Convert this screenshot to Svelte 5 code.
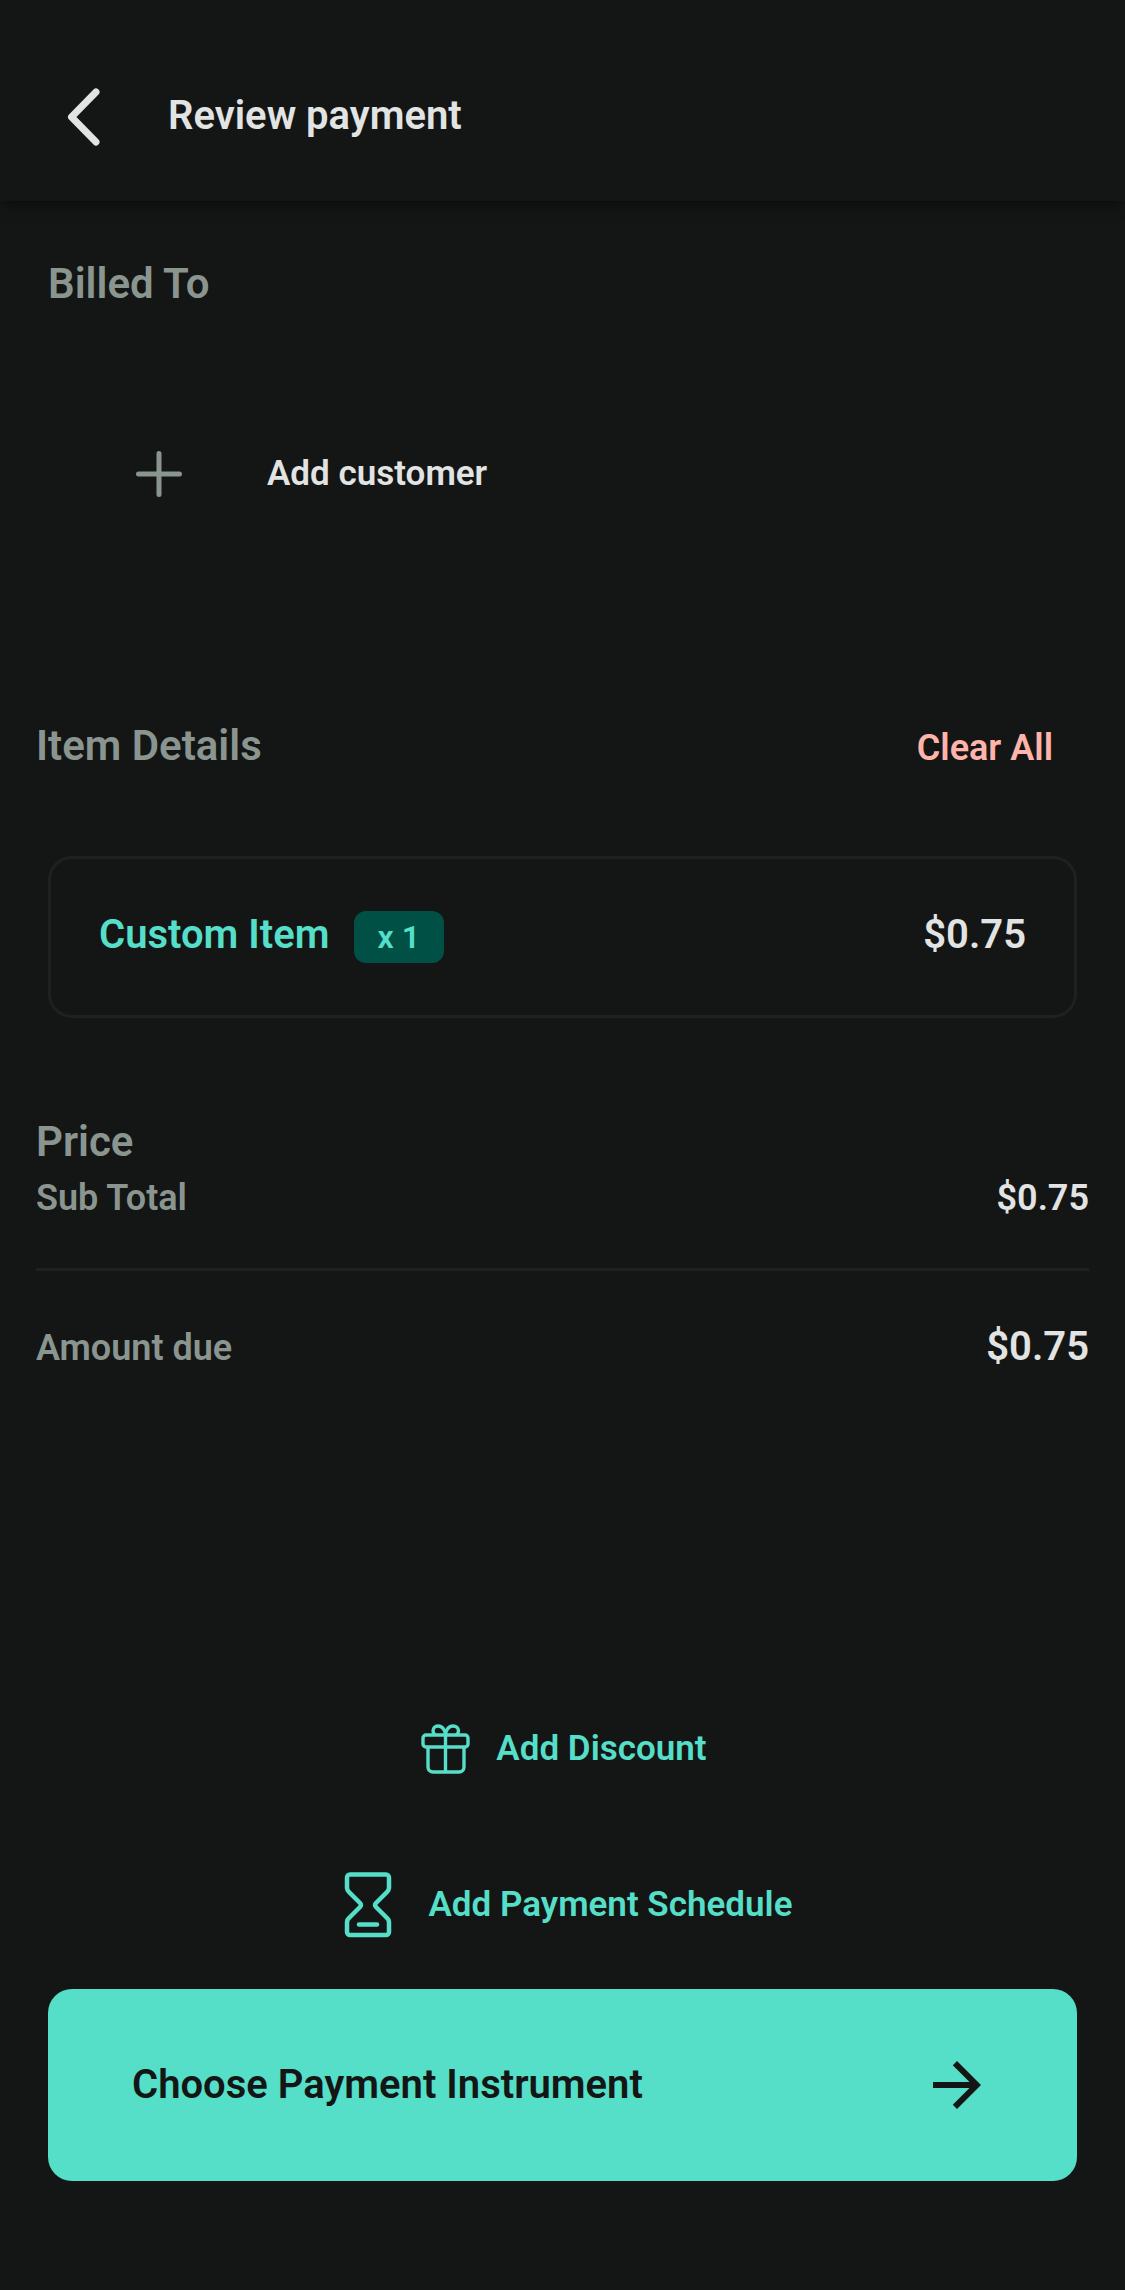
<script>
	let customer = $state('Add customer');
	let items = $state([{ name: 'Custom Item', qty: 1, price: 0.75 }]);

	const subTotal = $derived(items.reduce((sum, item) => sum + item.qty * item.price, 0));
	const amountDue = $derived(subTotal);

	/**
	 * Format an amount as dollars
	 * @param {Number} amount
	 * @return {String}
	 */
	function money(amount) {
		return '$' + amount.toFixed(2);
	}

	function clearAll() {
		items = [];
	}
</script>

<div class="page">
	<header class="topbar">
		<button class="back" type="button" aria-label="Back">
			<svg width="48" height="64" viewBox="0 0 48 64" fill="none" stroke="currentColor" stroke-width="7" stroke-linecap="round" stroke-linejoin="round">
				<path d="M36 8 11.500 33 36 58" />
			</svg>
		</button>
		<h1>Review payment</h1>
	</header>

	<main>
		<section class="billed">
			<h2>Billed To</h2>
			<button class="customer" type="button">
				<svg width="48" height="48" viewBox="0 0 48 48" fill="none" stroke="currentColor" stroke-width="5" stroke-linecap="round">
					<path d="M24 3.500v41M3.500 24h41" />
				</svg>
				<span>{customer}</span>
			</button>
		</section>

		<section class="items">
			<div class="row">
				<h2>Item Details</h2>
				<button class="clear" type="button" onclick={clearAll}>Clear All</button>
			</div>
			{#each items as item}
				<div class="card">
					<span class="name">{item.name}</span>
					<span class="qty">x {item.qty}</span>
					<span class="amount">{money(item.price)}</span>
				</div>
			{/each}
		</section>

		<section class="price">
			<h2>Price</h2>
			<div class="row">
				<span class="label">Sub Total</span>
				<span class="value">{money(subTotal)}</span>
			</div>
			<hr />
			<div class="row">
				<span class="label">Amount due</span>
				<span class="value total">{money(amountDue)}</span>
			</div>
		</section>
	</main>

	<footer>
		<button class="action" type="button">
			<svg width="54" height="54" viewBox="0 0 54 54" fill="none" stroke="currentColor" stroke-width="3.400" stroke-linejoin="round">
				<rect x="5" y="13" width="45" height="12" rx="3" />
				<path d="M10 25v20a5 5 0 0 0 5 5h26a5 5 0 0 0 5-5V25M27.500 11v39" />
				<path d="M27.500 13C27.500 8 24 4 20 4c-3 0-5 2-5 5 0 2 1 3 2 4M27.500 13C27.500 8 31 4 35 4c3 0 5.500 2 5.500 5 0 2-1 3-2 4" />
			</svg>
			<span>Add Discount</span>
		</button>
		<button class="action" type="button">
			<svg width="72" height="72" viewBox="0 0 72 72" fill="none" stroke="currentColor" stroke-width="4.500" stroke-linecap="round" stroke-linejoin="round">
				<path d="M18 5.500h36a3 3 0 0 1 3 3V19a6 6 0 0 1-2 4L44 34a3 3 0 0 0 0 4l11 11a6 6 0 0 1 2 4v10a3 3 0 0 1-3 3H18a3 3 0 0 1-3-3V53a6 6 0 0 1 2-4l11-11a3 3 0 0 0 0-4L17 23a6 6 0 0 1-2-4V8.500a3 3 0 0 1 3-3z" />
				<path d="M27 55.500h18" />
			</svg>
			<span>Add Payment Schedule</span>
		</button>
		<button class="choose" type="button">
			<span>Choose Payment Instrument</span>
			<svg width="72" height="72" viewBox="0 0 24 24" fill="currentColor">
				<path d="m12 4-1.410 1.410L16.170 11H4v2h12.170l-5.580 5.590L12 20l8-8z" />
			</svg>
		</button>
	</footer>
</div>

<style>
	:global(body) {
		margin: 0;
		background: #141615;
	}

	.page {
		--text: #e2e4e3;
		--muted: #8a9590;
		--accent: #55dec8;
		--line: #1e2120;
		box-sizing: border-box;
		min-height: 100vh;
		display: flex;
		flex-direction: column;
		background: #141615;
		color: var(--text);
		font-family: Roboto, sans-serif;
		font-size: 36px;
		font-weight: 600;
		line-height: 48px;
	}

	button {
		display: flex;
		align-items: center;
		margin: 0;
		padding: 0;
		border: 0;
		background: none;
		color: inherit;
		font: inherit;
		cursor: pointer;
	}

	svg {
		display: block;
		flex: none;
	}

	h1,
	h2 {
		margin: 0;
		font-size: 42px;
		font-weight: 600;
	}

	h1 {
		font-size: 40px;
	}

	h2 {
		color: var(--muted);
	}

	.topbar {
		display: flex;
		align-items: center;
		gap: 60px;
		padding: 84px 60px 53px;
		box-shadow: 0 8px 12px -4px rgba(0, 0, 0, 0.5);
	}

	.row {
		display: flex;
		align-items: baseline;
		justify-content: space-between;
	}

	.billed {
		padding: 59px 48px 0;
	}

	.customer {
		gap: 84px;
		width: 100%;
		margin-top: 82px;
		padding: 60px 87px;
		font-size: 35px;
	}

	.customer svg {
		color: var(--muted);
	}

	.items {
		padding: 164px 36px 0;
	}

	.clear {
		padding-right: 36px;
		color: #ffb4ab;
	}

	.card {
		display: flex;
		align-items: baseline;
		margin: 84px 12px 0;
		padding: 52px 48px;
		border: 3px solid var(--line);
		border-radius: 24px;
		font-size: 40px;
	}

	.name {
		color: var(--accent);
	}

	.qty {
		margin-left: 24px;
		padding: 0 24px;
		border-radius: 12px;
		background: #005045;
		color: var(--accent);
		font-size: 32px;
		line-height: 52px;
	}

	.amount {
		margin-left: auto;
	}

	.price {
		padding: 100px 36px 0;
	}

	.price .row {
		line-height: 56px;
	}

	.price h2 {
		margin-bottom: 4px;
	}

	.label {
		color: var(--muted);
	}

	.total {
		font-size: 40px;
	}

	hr {
		height: 3px;
		margin: 42px 0 48px;
		border: 0;
		background: var(--line);
	}

	footer {
		display: flex;
		flex-direction: column;
		align-items: center;
		margin-top: auto;
		padding: 48px 48px 109px;
	}

	.action {
		gap: 24px;
		color: var(--accent);
		font-size: 35px;
	}

	.action + .action {
		margin-top: 93px;
	}

	.choose {
		justify-content: space-between;
		width: 100%;
		margin-top: 48px;
		padding: 60px 84px;
		border-radius: 24px;
		background: var(--accent);
		color: #141615;
		font-size: 40px;
	}
</style>
